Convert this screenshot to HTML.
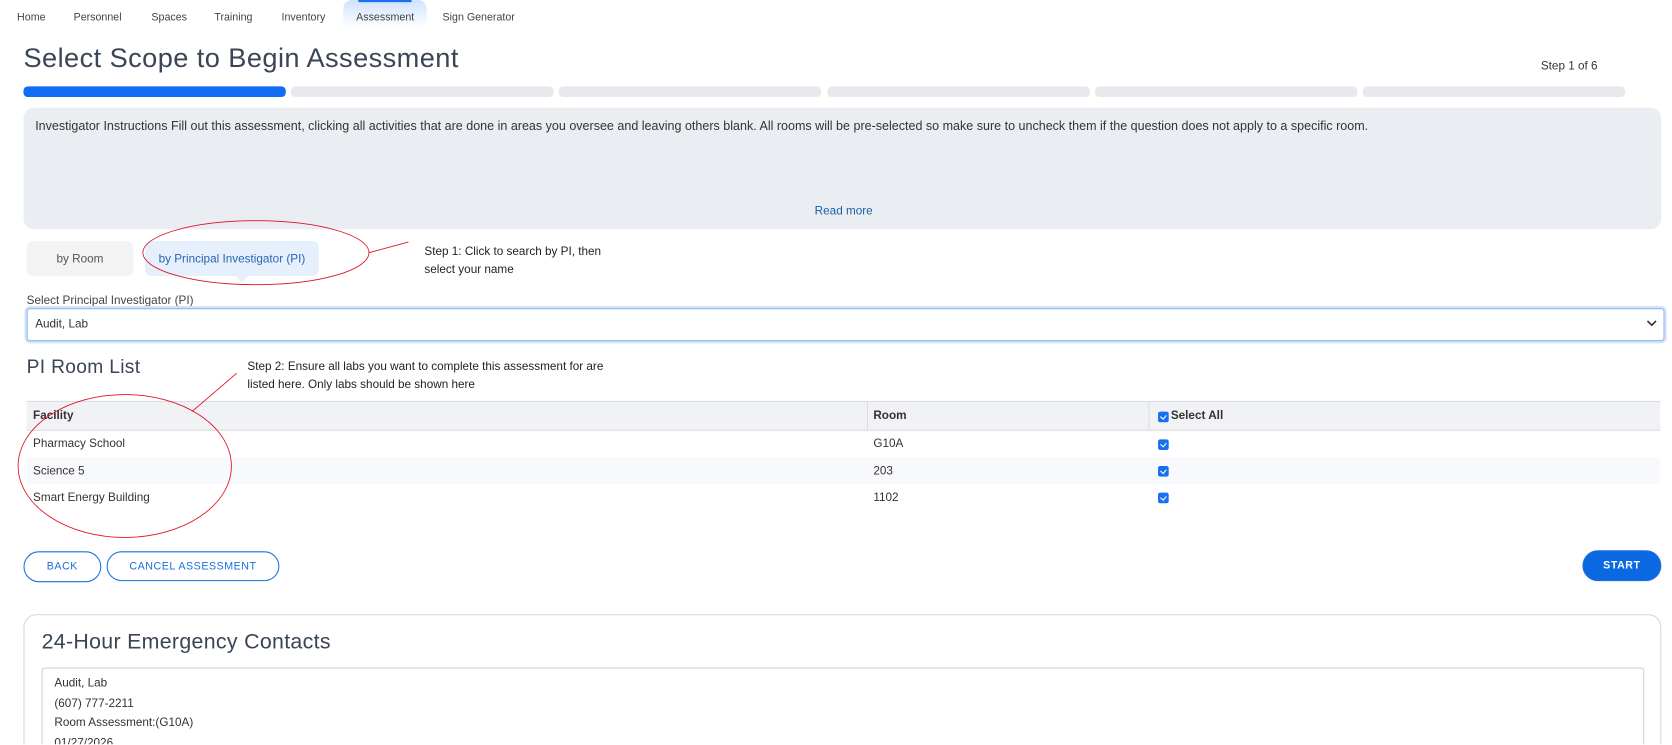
<!DOCTYPE html>
<html><head><style>
*{box-sizing:border-box;margin:0;padding:0}
html,body{width:1672px;height:745px;overflow:hidden;background:#fff}
body{font-family:"Liberation Sans",sans-serif;color:#333;position:relative}
#w{position:absolute;left:0;top:0;width:1568px;height:698px;overflow:hidden;transform:scale(1.06633);transform-origin:0 0}
.a{position:absolute}
.nav{font-size:10px;color:#444;top:11px}
.seg{position:absolute;top:81px;height:10px;border-radius:4px;background:#e7e9ed;width:246px}
.btn{position:absolute;border:1px solid #1a6fe0;border-radius:15px;color:#1a6fe0;font-size:10px;letter-spacing:.5px;display:flex;align-items:center;justify-content:center;background:#fff}
.cb{position:absolute;width:10px;height:10px;background:#1a6ff0;border-radius:2px;left:1086px}
.cb:after{content:"";position:absolute;left:3px;top:2px;width:3px;height:4px;border:solid #fff;border-width:0 1.5px 1.5px 0;transform:rotate(40deg)}
.td{position:absolute;font-size:11px;color:#333}
</style></head><body><div id="w">
<div class="a" style="left:322px;top:0;width:78px;height:26px;border-radius:8px 8px 0 0;background:linear-gradient(#cfe2ff,#fff)"></div>
<div class="a" style="left:336px;top:0;width:50px;height:2px;background:#1a6ff0"></div>
<div class="a nav" style="left:16px">Home</div>
<div class="a nav" style="left:69px">Personnel</div>
<div class="a nav" style="left:142px">Spaces</div>
<div class="a nav" style="left:201px">Training</div>
<div class="a nav" style="left:264px">Inventory</div>
<div class="a nav" style="left:334px">Assessment</div>
<div class="a nav" style="left:415px">Sign Generator</div>
<div class="a" style="left:22px;top:41px;font-size:25.5px;color:#3a4556;letter-spacing:.4px">Select Scope to Begin Assessment</div>
<div class="a" style="left:1445px;top:56px;font-size:11px;color:#333">Step 1 of 6</div>
<div class="seg" style="left:22px;background:#116df5"></div>
<div class="seg" style="left:273px"></div>
<div class="seg" style="left:524px"></div>
<div class="seg" style="left:776px"></div>
<div class="seg" style="left:1027px"></div>
<div class="seg" style="left:1278px"></div>
<div class="a" style="left:22px;top:101px;width:1536px;height:114px;background:#eaedf2;border-radius:10px"></div>
<div class="a" style="left:33px;top:112px;font-size:11.75px;color:#333;white-space:nowrap">Investigator Instructions Fill out this assessment, clicking all activities that are done in areas you oversee and leaving others blank. All rooms will be pre-selected so make sure to uncheck them if the question does not apply to a specific room.</div>
<div class="a" style="left:764px;top:192px;font-size:11px;color:#1b5fa8">Read more</div>
<div class="a" style="left:25px;top:226px;width:100px;height:33px;background:#f3f3f4;border-radius:6px;font-size:11px;color:#555;display:flex;align-items:center;justify-content:center">by Room</div>
<div class="a" style="left:136px;top:226px;width:163px;height:33px;background:#e6f0fd;border-radius:6px;font-size:11px;color:#2a64b0;display:flex;align-items:center;justify-content:center">by Principal Investigator (PI)</div>
<div class="a" style="left:221px;top:259px;border:6px solid transparent;border-top:6px solid #e6f0fd"></div>
<div class="a" style="left:398px;top:228px;font-size:11px;color:#222;line-height:17px">Step 1: Click to search by PI, then<br>select your name</div>
<div class="a" style="left:25px;top:276px;font-size:11px;color:#444">Select Principal Investigator (PI)</div>
<div class="a" style="left:25px;top:289px;width:1536px;height:31px;border:1px solid #8fb3ea;box-shadow:0 0 0 2px #d3e3fb;border-radius:3px;font-size:11px;padding:8px 7px;color:#333">Audit, Lab</div>
<svg class="a" style="left:1543px;top:298px" width="12" height="10"><path d="M2 3l4 4 4-4" stroke="#333" stroke-width="1.5" fill="none"/></svg>
<div class="a" style="left:25px;top:334px;font-size:18px;color:#3a4556;letter-spacing:.3px">PI Room List</div>
<div class="a" style="left:232px;top:336px;font-size:11px;color:#222;line-height:17px">Step 2: Ensure all labs you want to complete this assessment for are<br>listed here. Only labs should be shown here</div>
<div class="a" style="left:25px;top:376px;width:1532px;height:28px;background:#f1f2f6;border-top:1px solid #dcdde0;border-bottom:1px solid #dcdde0"></div>
<div class="a" style="left:813px;top:377px;width:1px;height:26px;background:#dcdde0"></div>
<div class="a" style="left:1077px;top:377px;width:1px;height:26px;background:#dcdde0"></div>
<div class="td" style="left:31px;top:384px;font-weight:bold">Facility</div>
<div class="td" style="left:819px;top:384px;font-weight:bold">Room</div>
<div class="cb" style="top:386px"></div>
<div class="td" style="left:1098px;top:384px;font-weight:bold">Select All</div>
<div class="a" style="left:25px;top:429px;width:1532px;height:25px;background:#f8f9fc"></div>
<div class="td" style="left:31px;top:410px">Pharmacy School</div><div class="td" style="left:819px;top:410px">G10A</div><div class="cb" style="top:412px"></div>
<div class="td" style="left:31px;top:436px">Science 5</div><div class="td" style="left:819px;top:436px">203</div><div class="cb" style="top:437px"></div>
<div class="td" style="left:31px;top:461px">Smart Energy Building</div><div class="td" style="left:819px;top:461px">1102</div><div class="cb" style="top:462px"></div>
<svg class="a" style="left:0;top:0" width="700" height="520">
<ellipse cx="240" cy="237" rx="106" ry="30" fill="none" stroke="#e01020" stroke-width="0.8"/>
<line x1="346" y1="237" x2="383" y2="227" stroke="#e01020" stroke-width="0.8"/>
<ellipse cx="117" cy="437" rx="100" ry="67" fill="none" stroke="#e01020" stroke-width="0.8"/>
<line x1="180" y1="386" x2="222" y2="350" stroke="#e01020" stroke-width="0.8"/>
</svg>
<div class="btn" style="left:22px;top:517px;width:73px;height:29px">BACK</div>
<div class="btn" style="left:100px;top:517px;width:162px;height:28px">CANCEL ASSESSMENT</div>
<div class="btn" style="left:1484px;top:516px;width:74px;height:29px;background:#0a68e0;color:#fff;font-weight:bold">START</div>
<div class="a" style="left:22px;top:576px;width:1536px;height:200px;border:1px solid #d6d6d8;border-radius:12px"></div>
<div class="a" style="left:39px;top:591px;font-size:20px;color:#3a4556;letter-spacing:.3px">24-Hour Emergency Contacts</div>
<div class="a" style="left:39px;top:626px;width:1503px;height:130px;border:1px solid #d0d0d0;border-radius:3px"></div>
<div class="a" style="left:51px;top:632px;font-size:11px;color:#333;line-height:18.5px">Audit, Lab<br>(607) 777-2211<br>Room Assessment:(G10A)<br>01/27/2026</div>
</div></body></html>
